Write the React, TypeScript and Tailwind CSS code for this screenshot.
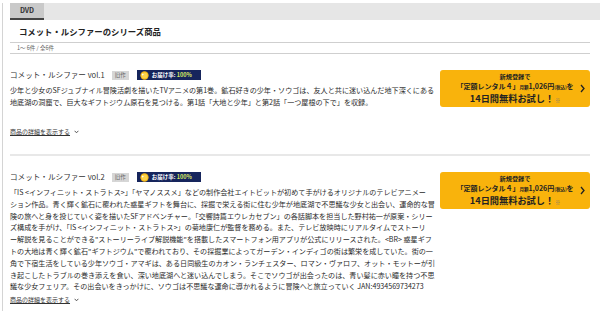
import React from 'react';

type Item = {
  title: string;
  lines: string[];
};

const items: Item[] = [
  {
    title: 'コメット・ルシファー vol.1',
    lines: [
      '少年と少女のSFジュブナイル冒険活劇を描いたTVアニメの第1巻。鉱石好きの少年・ソウゴは、友人と共に迷い込んだ地下深くにある',
      '地底湖の洞窟で、巨大なギフトジウム原石を見つける。第1話「大地と少年」と第2話「一つ屋根の下で」を収録。',
    ],
  },
  {
    title: 'コメット・ルシファー vol.2',
    lines: [
      '「IS <インフィニット・ストラトス>」「ヤマノススメ」などの制作会社エイトビットが初めて手がけるオリジナルのテレビアニメー',
      'ション作品。青く輝く鉱石に覆われた惑星ギフトを舞台に、採掘で栄える街に住む少年が地底湖で不思議な少女と出会い、運命的な冒',
      '険の旅へと身を投じていく姿を描いたSFアドベンチャー。「交響詩篇エウレカセブン」の各話脚本を担当した野村祐一が原案・シリー',
      'ズ構成を手がけ、「IS <インフィニット・ストラトス>」の菊地康仁が監督を務める。また、テレビ放映時にリアルタイムでストーリ',
      'ー解説を見ることができる"ストーリーライブ解説機能"を搭載したスマートフォン用アプリが公式にリリースされた。<BR> 惑星ギフ',
      'トの大地は青く輝く鉱石"ギフトジウム"で覆われており、その採掘業によってガーデン・インディゴの街は繁栄を成していた。街の一',
      '角で下宿生活をしている少年ソウゴ・アマギは、ある日同級生のカオン・ランチェスター、ロマン・ヴァロフ、オット・モットーが引',
      'き起こしたトラブルの巻き添えを食い、深い地底湖へと迷い込んでしまう。そこでソウゴが出会ったのは、青い髪に赤い瞳を持つ不思',
      '議な少女フェリア。その出会いをきっかけに、ソウゴは不思議な運命に導かれるように冒険へと旅立っていく JAN:4934569734273',
    ],
  },
];

function Coin() {
  return (
    <svg width="9" height="9" viewBox="0 0 10 10">
      <circle cx="5" cy="5" r="4.6" fill="#f3b616" />
      <circle cx="5" cy="5" r="3.4" fill="#fcd34a" />
      <path d="M3 2.6 L3.5 3.6 L4.5 4 L3.5 4.4 L3 5.4 L2.5 4.4 L1.5 4 L2.5 3.6 Z" fill="#fff" />
    </svg>
  );
}

function TrialButton() {
  return (
    <div className="relative w-[150px] h-[37px] rounded-[3px] bg-[#f9b30c] flex flex-col items-center text-[#222] font-bold cursor-pointer">
      <div className="text-[6.2px] leading-[9px] mt-[2px]">新規登録で</div>
      <div className="text-[7px] leading-[10px] whitespace-nowrap">
        「定額レンタル４」<span className="text-[4.5px]">月額</span>1,026円<span className="text-[4.5px]">(税込)</span>を
      </div>
      <div className="text-[9.2px] leading-[13.5px] whitespace-nowrap">
        14日間無料お試し！<span className="text-[5px] font-normal text-[#777] ml-[1px]">※</span>
      </div>
      <svg className="absolute right-[5px] top-[14px]" width="5" height="9" viewBox="0 0 5 9">
        <path d="M1 1 L4 4.5 L1 8" fill="none" stroke="#222" strokeWidth="1.3" />
      </svg>
    </div>
  );
}

function ItemRow({ item }: { item: Item }) {
  return (
    <div className="flex gap-[6px] pt-[16px] pb-[17px] border-b-2 border-[#e8e8e8]">
      <div className="flex-1 min-w-0">
        <div className="flex items-center h-[10px]">
          <span className="text-[7.6px] leading-[10px] text-[#333]">{item.title}</span>
          <span className="ml-[7px] h-[9px] px-[3px] bg-[#d6d6d6] text-[#666] text-[5.5px] leading-[9px]">旧作</span>
          <span className="ml-[8px] h-[10px] w-[64px] bg-[#16255c] flex items-center gap-[3px] pl-[3px]">
            <Coin />
            <span className="text-[5.5px] leading-[10px] font-bold text-white whitespace-nowrap">
              お届け率: <span className="text-[#d8ec62]">100%</span>
            </span>
          </span>
        </div>
        <div className="mt-[5px] min-h-[40px] text-[7.1px] leading-[11.8px] text-[#2a2a2a]">
          {item.lines.map((line, i) => (
            <div key={i} className="whitespace-nowrap">{line}</div>
          ))}
        </div>
        <div className="mt-[2px] h-[10px] flex items-center gap-[4px]">
          <a className="text-[6px] leading-[10px] text-[#333] underline cursor-pointer">商品の詳細を表示する</a>
          <svg width="5" height="4" viewBox="0 0 5 4">
            <path d="M0.6 0.8 L2.5 2.8 L4.4 0.8" fill="none" stroke="#444" strokeWidth="0.9" />
          </svg>
        </div>
      </div>
      <div className="w-[150px] shrink-0">
        <TrialButton />
      </div>
    </div>
  );
}

export default function App() {
  return (
    <div className="w-[600px] h-[311px] overflow-hidden bg-white pl-[2px] font-['Noto_Sans_CJK_JP',sans-serif]">
      <div className="h-full border-l border-[#d4d4d4] pl-[7px] pr-[10px]">
        {/* tab bar */}
        <div className="mt-[3px] mr-[-10px] h-[17px] bg-[#e6e6e6] flex">
          <div className="w-[34px] h-[17px] bg-[#c9c9c9] border-b-2 border-[#444] flex items-center justify-center text-[7px] font-bold text-[#333]">
            DVD
          </div>
        </div>

        {/* series header */}
        <div className="h-[23px] flex items-center pl-[9px] border-b border-[#cfcfcf]">
          <h2 className="text-[8.4px] font-bold text-[#222]">コメット・ルシファーのシリーズ商品</h2>
        </div>
        <div className="h-[11px] flex items-center pl-[7px] border-b border-[#cfcfcf] text-[5.5px] text-[#666]">
          1～ 6件 / 全6件
        </div>

        {items.map((item, i) => (
          <ItemRow key={i} item={item} />
        ))}
      </div>
    </div>
  );
}
